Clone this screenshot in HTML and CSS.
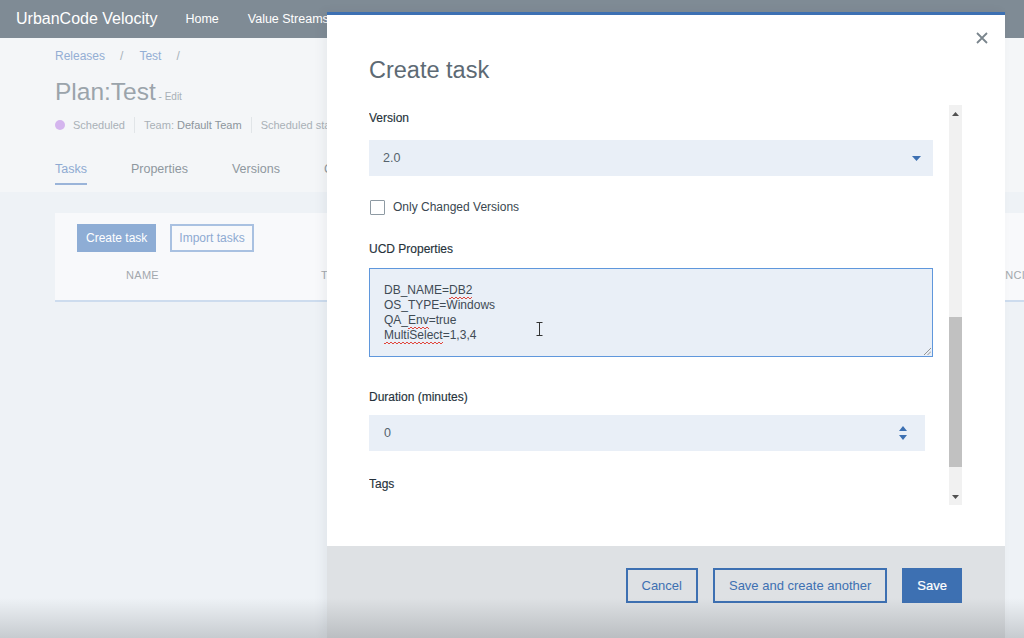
FILE: index.html
```html
<!DOCTYPE html>
<html lang="en">
<head>
<meta charset="utf-8">
<title>UrbanCode Velocity - Create task</title>
<link rel="stylesheet" href="styles.css">
</head>
<body>
<div class="app">
  <header class="topbar">
    <span class="brand">UrbanCode Velocity</span>
    <nav class="topnav">
      <span class="nav-home">Home</span>
      <span class="nav-vs">Value Streams</span>
    </nav>
  </header>

  <section class="page-top">
    <div class="crumbs"><span>Releases</span><span class="sep">/</span><span>Test</span><span class="sep">/</span></div>
    <div class="plan-title"><span class="plan-name">Plan:Test</span><span class="plan-edit"> - Edit</span></div>
    <div class="status-row">
      <span class="dot"></span>
      <span class="st">Scheduled</span>
      <span class="divider"></span>
      <span class="st">Team: <span class="st-dark">Default Team</span></span>
      <span class="divider"></span>
      <span class="st">Scheduled start</span>
    </div>
    <div class="tabs">
      <span class="tab active">Tasks</span>
      <span class="tab">Properties</span>
      <span class="tab">Versions</span>
      <span class="tab">Changes</span>
    </div>
  </section>

  <section class="page-body">
    <div class="card">
      <div class="card-actions">
        <span class="bg-btn bg-primary">Create task</span>
        <span class="bg-btn bg-secondary">Import tasks</span>
      </div>
      <div class="card-head">
        <span class="col-name">NAME</span>
        <span class="col-type">TYPE</span>
        <span class="col-dep">DEPENDENCIES</span>
      </div>
    </div>
  </section>
</div>

<div class="modal">
  <div class="modal-body">
    <span class="close" aria-label="close">
      <svg width="12" height="12" viewBox="0 0 12 12"><path d="M1 1 L11 11 M11 1 L1 11" stroke="#7a858d" stroke-width="1.8" fill="none"/></svg>
    </span>
    <h1 class="modal-title">Create task</h1>
    <div class="scroll-area">
      <div class="form">
        <div class="label l-version">Version</div>
        <div class="field select">
          <span>2.0</span>
          <svg class="caret" width="9" height="5" viewBox="0 0 9 5"><path d="M0 0 H9 L4.5 5 Z" fill="#3d70b2"/></svg>
        </div>
        <div class="check-row">
          <span class="checkbox"></span>
          <span class="check-label">Only Changed Versions</span>
        </div>
        <div class="label l-ucd">UCD Properties</div>
        <div class="textarea">
          <div>DB_NAME=<span class="sp">DB2</span></div>
          <div>OS_TYPE=Windows</div>
          <div>QA_<span class="sp">Env</span>=true</div>
          <div><span class="sp">MultiSelect</span>=1,3,4</div>
          <svg class="ibeam" width="7" height="14" viewBox="0 0 7 14"><path d="M0.5 0.5 H6.5 M3.5 0.5 V13.5 M0.5 13.5 H6.5" stroke="#333" stroke-width="1" fill="none"/></svg>
          <svg class="grip" width="7" height="7" viewBox="0 0 7 7"><path d="M7 0 L0 7 M7 3.5 L3.5 7" stroke="#8a8a8a" stroke-width="0.9" fill="none"/></svg>
        </div>
        <div class="label l-dur">Duration (minutes)</div>
        <div class="field number">
          <span>0</span>
          <svg class="spin" width="8" height="14" viewBox="0 0 8 14"><path d="M0 5 L4 0 L8 5 Z M0 9 H8 L4 14 Z" fill="#3d70b2"/></svg>
        </div>
        <div class="label l-tags">Tags</div>
      </div>
      <div class="scrollbar">
        <div class="sb-btn"><svg width="7" height="4" viewBox="0 0 7 4"><path d="M0 4 L3.5 0 L7 4 Z" fill="#505050"/></svg></div>
        <div class="sb-track"><div class="sb-thumb"></div></div>
        <div class="sb-btn"><svg width="7" height="4" viewBox="0 0 7 4"><path d="M0 0 H7 L3.5 4 Z" fill="#505050"/></svg></div>
      </div>
    </div>
  </div>
  <div class="modal-footer">
    <span class="btn btn-secondary">Cancel</span>
    <span class="btn btn-secondary">Save and create another</span>
    <span class="btn btn-primary">Save</span>
  </div>
</div>

<div class="vignette"></div>
</body>
</html>
```

FILE: styles.css
```css
* { box-sizing: border-box; }
html, body {
  margin: 0;
  padding: 0;
}
body {
  width: 1024px;
  height: 638px;
  overflow: hidden;
  position: relative;
  background: #eef2f6;
  font-family: "Liberation Sans", Arial, sans-serif;
  color: #2d3a44;
}

/* ---------- background app (dimmed) ---------- */
.app {
  display: flex;
  flex-direction: column;
  width: 1024px;
}
.topbar {
  height: 38px;
  background: #7f8b95;
  display: flex;
  align-items: center;
  padding-left: 16px;
  color: #ffffff;
}
.brand {
  font-size: 16px;
}
.topnav {
  display: flex;
  font-size: 12.5px;
  margin-left: 28px;
}
.nav-vs { margin-left: 29px; }

.page-top {
  background: #f4f6f8;
  height: 154px;
  padding-left: 55px;
  padding-top: 10px;
}
.crumbs {
  display: flex;
  height: 16px;
  line-height: 16px;
  font-size: 12px;
  color: #93aed4;
}
.crumbs .sep {
  margin: 0 16px 0 15px;
  color: #a9b3bb;
}
.plan-title {
  margin-top: 13px;
  height: 30px;
  line-height: 30px;
  color: #9ba4ab;
}
.plan-name { font-size: 24.5px; }
.plan-edit { font-size: 10px; color: #a8b0b6; }
.status-row {
  margin-top: 10px;
  height: 16px;
  display: flex;
  align-items: center;
  font-size: 11px;
  color: #a9b1b7;
}
.dot {
  width: 10px;
  height: 10px;
  border-radius: 50%;
  background: #d4b5ee;
  margin-right: 8px;
}
.st-dark { color: #8c959c; }
.divider {
  width: 1px;
  height: 16px;
  background: #e1e5e8;
  margin: 0 9px;
}
.tabs {
  margin-top: 28px;
  display: flex;
  gap: 44px;
  font-size: 12.5px;
  color: #8f989f;
}
.tab {
  line-height: 16px;
  padding-bottom: 6px;
  border-bottom: 2px solid transparent;
}
.tab.active {
  color: #8eaad2;
  border-bottom-color: #9ab4d9;
}

.page-body {
  padding-top: 21px;
  padding-left: 55px;
}
.card {
  width: 1000px;
  height: 89px;
  background: #f8f9fb;
  border-bottom: 2px solid #cddcee;
  padding: 11px 0 0 22px;
}
.card-actions {
  display: flex;
  gap: 14px;
  height: 28px;
}
.bg-btn {
  height: 28px;
  line-height: 24px;
  font-size: 12px;
  padding: 0 7px;
  border: 2px solid transparent;
}
.bg-primary {
  background: #8eadd5;
  border-color: #8eadd5;
  color: #ffffff;
}
.bg-secondary {
  border-color: #a9c1e1;
  color: #8eaad2;
}
.card-head {
  display: flex;
  margin-top: 17px;
  padding-left: 49px;
  font-size: 11px;
  color: #a3a8ad;
  letter-spacing: 0.3px;
}
.col-name { width: 195px; }
.col-type { width: 629px; }

/* ---------- modal ---------- */
.modal {
  position: absolute;
  left: 327px;
  top: 12px;
  width: 678px;
  bottom: 0;
  display: flex;
  flex-direction: column;
  border-top: 3px solid #3d70b2;
  box-shadow: -4px 0 10px rgba(40, 50, 60, 0.06);
}
.modal-body {
  position: relative;
  height: 531px;
  background: #ffffff;
  padding: 40px 0 0 42px;
}
.close {
  position: absolute;
  right: 17px;
  top: 17px;
  width: 12px;
  height: 12px;
  display: block;
}
.close svg { display: block; }
.modal-title {
  margin: 0;
  font-size: 23.5px;
  font-weight: 300;
  line-height: 30px;
  height: 30px;
  color: #5d6a74;
}
.scroll-area {
  margin-top: 20px;
  height: 400px;
  width: 593px;
  display: flex;
}
.form {
  width: 564px;
  overflow: hidden;
  padding-top: 5px;
}
.label {
  font-size: 12px;
  line-height: 16px;
  height: 16px;
  color: #26323b;
  -webkit-text-stroke: 0.15px #26323b;
}
.field {
  height: 36px;
  background: #e9eff7;
  display: flex;
  align-items: center;
  justify-content: space-between;
  font-size: 12.5px;
  color: #56636d;
}
.select {
  margin-top: 14px;
  padding: 0 12px 0 14px;
}
.caret { display: block; }
.check-row {
  margin-top: 23px;
  display: flex;
  align-items: center;
  height: 16px;
  gap: 8px;
  padding-left: 1px;
}
.checkbox {
  width: 15px;
  height: 15px;
  border: 1.5px solid #8e9aa3;
  border-radius: 1px;
  background: #ffffff;
}
.check-label {
  font-size: 12px;
  color: #3a4750;
}
.l-ucd { margin-top: 26px; }
.textarea {
  position: relative;
  margin-top: 11px;
  height: 89px;
  background: #e9eff7;
  border: 1px solid #5f97dc;
  padding: 14px 0 0 14px;
  font-size: 12px;
  line-height: 15px;
  color: #3f4b55;
}
.textarea > div {
  height: 15px;
}
.sp {
  display: inline-block;
  line-height: 13px;
  vertical-align: top;
  margin-top: 1px;
  background-image:
    linear-gradient(135deg, transparent 45%, #e0463c 45%, #e0463c 60%, transparent 60%),
    linear-gradient(45deg, transparent 45%, #e0463c 45%, #e0463c 60%, transparent 60%);
  background-size: 4px 2px;
  background-repeat: repeat-x;
  background-position: 0 100%, 2px 100%;
  padding-bottom: 2px;
}
.ibeam {
  position: absolute;
  left: 166px;
  top: 53px;
}
.grip {
  position: absolute;
  right: 1px;
  bottom: 1px;
}
.l-dur { margin-top: 32px; }
.number {
  margin-top: 10px;
  width: 556px;
  padding: 0 18px 0 15px;
}
.spin { display: block; }
.l-tags { margin-top: 25px; }

.scrollbar {
  width: 13px;
  margin-left: 16px;
  background: #f1f1f1;
  display: flex;
  flex-direction: column;
}
.sb-btn {
  height: 17px;
  display: flex;
  align-items: center;
  justify-content: center;
}
.sb-btn svg { display: block; }
.sb-track {
  flex: 1;
  padding-top: 195px;
}
.sb-thumb {
  height: 150px;
  background: #c1c1c1;
}

.modal-footer {
  flex: 1;
  background: #dee1e4;
  display: flex;
  justify-content: flex-end;
  align-items: flex-start;
  gap: 15px;
  padding: 22px 43px 0 0;
}
.btn {
  height: 35px;
  line-height: 31px;
  padding: 0 14px;
  font-size: 13px;
  border: 2px solid #3d70b2;
  color: #3d70b2;
}
.btn-primary {
  background: #3d70b2;
  color: #ffffff;
  padding: 0 13px;
  -webkit-text-stroke: 0.2px #ffffff;
}

/* bottom darkening (video vignette) */
.vignette {
  position: absolute;
  left: 0;
  right: 0;
  bottom: 0;
  height: 40px;
  background: linear-gradient(to bottom, rgba(60, 66, 72, 0), rgba(60, 66, 72, 0.22));
  pointer-events: none;
}
```
